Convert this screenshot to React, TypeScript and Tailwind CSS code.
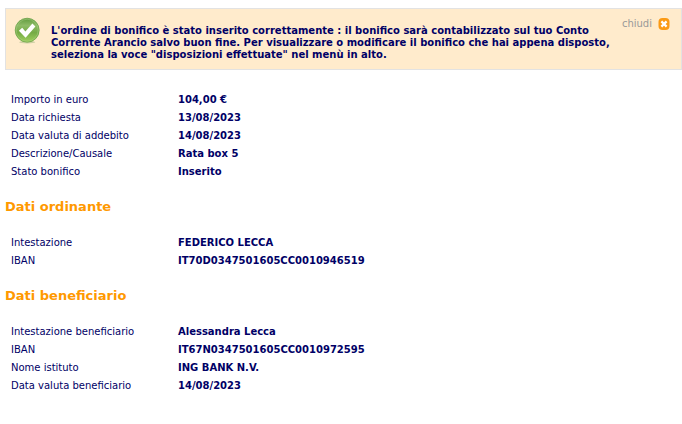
type Row = { label: string; value: string };

const transfer: Row[] = [
  { label: "Importo in euro", value: "104,00 €" },
  { label: "Data richiesta", value: "13/08/2023" },
  { label: "Data valuta di addebito", value: "14/08/2023" },
  { label: "Descrizione/Causale", value: "Rata box 5" },
  { label: "Stato bonifico", value: "Inserito" },
];

const sender: Row[] = [
  { label: "Intestazione", value: "FEDERICO LECCA" },
  { label: "IBAN", value: "IT70D0347501605CC0010946519" },
];

const beneficiary: Row[] = [
  { label: "Intestazione beneficiario", value: "Alessandra Lecca" },
  { label: "IBAN", value: "IT67N0347501605CC0010972595" },
  { label: "Nome istituto", value: "ING BANK N.V." },
  { label: "Data valuta beneficiario", value: "14/08/2023" },
];

function CheckIcon() {
  return (
    <svg className="size-7 shrink-0" viewBox="0 0 28 28" aria-hidden="true">
      <defs>
        <linearGradient id="ball" x1="0" y1="0" x2="0" y2="1">
          <stop offset="0" stopColor="#5f9a3c" />
          <stop offset="0.3" stopColor="#8dbb66" />
          <stop offset="0.6" stopColor="#75ab45" />
          <stop offset="1" stopColor="#a0d05c" />
        </linearGradient>
      </defs>
      <ellipse cx="13.2" cy="25.2" rx="8" ry="1.2" fill="#cfcfa4" />
      <circle cx="13.2" cy="13.2" r="12" fill="url(#ball)" stroke="#68a048" strokeWidth="0.7" />
      <circle cx="13.2" cy="13.2" r="11" fill="none" stroke="#a9cf87" strokeWidth="0.5" />
      <path d="M4.9 13.8 8.2 10.8l3.2 3.6 7-7.8 3 2.9-9.8 11.2z" fill="#fff" />
    </svg>
  );
}

function CloseIcon() {
  return (
    <svg className="size-3" viewBox="0 0 12 12" aria-hidden="true">
      <rect x="0.5" y="0" width="11" height="12" rx="4" fill="#fb9a14" />
      <path d="M3.4 3.4l5.2 5.2M8.6 3.4 3.4 8.6" stroke="#fff" strokeWidth="2.2" />
    </svg>
  );
}

function DataTable({ rows }: { rows: Row[] }) {
  return (
    <table className="w-full table-fixed text-left">
      <tbody>
        {rows.map((row) => (
          <tr key={row.label} className="h-[18px]">
            <th scope="row" className="w-[173px] pl-1.5 font-normal">
              {row.label}
            </th>
            <td className="font-bold">{row.value}</td>
          </tr>
        ))}
      </tbody>
    </table>
  );
}

function Heading({ children }: { children: string }) {
  return <h2 className="pt-4 pb-[17px] text-[13px] leading-5 font-bold text-[#ff9900]">{children}</h2>;
}

export default function App() {
  return (
    <main className="bg-white pt-2 pb-7 pl-[5px] font-['DejaVu_Sans',Verdana,sans-serif] text-[10px] leading-3 text-[#000066]">
      <div
        role="status"
        className="flex items-start border border-[#e2e2e2] bg-[#ffebcc] pt-2 pr-[11px] pb-2 pl-2"
      >
        <CheckIcon />
        <p className="flex-1 pt-2 pl-[9px] font-bold">
          L'ordine di bonifico è stato inserito correttamente : il bonifico sarà contabilizzato sul tuo Conto
          Corrente Arancio salvo buon fine. Per visualizzare o modificare il bonifico che hai appena disposto,
          seleziona la voce "disposizioni effettuate" nel menù in alto.
        </p>
        <button type="button" className="flex cursor-pointer items-center gap-1.5 pt-px pl-2 text-[#999999]">
          chiudi
          <CloseIcon />
        </button>
      </div>
      <div className="pt-[21px]">
        <DataTable rows={transfer} />
      </div>
      <Heading>Dati ordinante</Heading>
      <DataTable rows={sender} />
      <Heading>Dati beneficiario</Heading>
      <DataTable rows={beneficiary} />
    </main>
  );
}
